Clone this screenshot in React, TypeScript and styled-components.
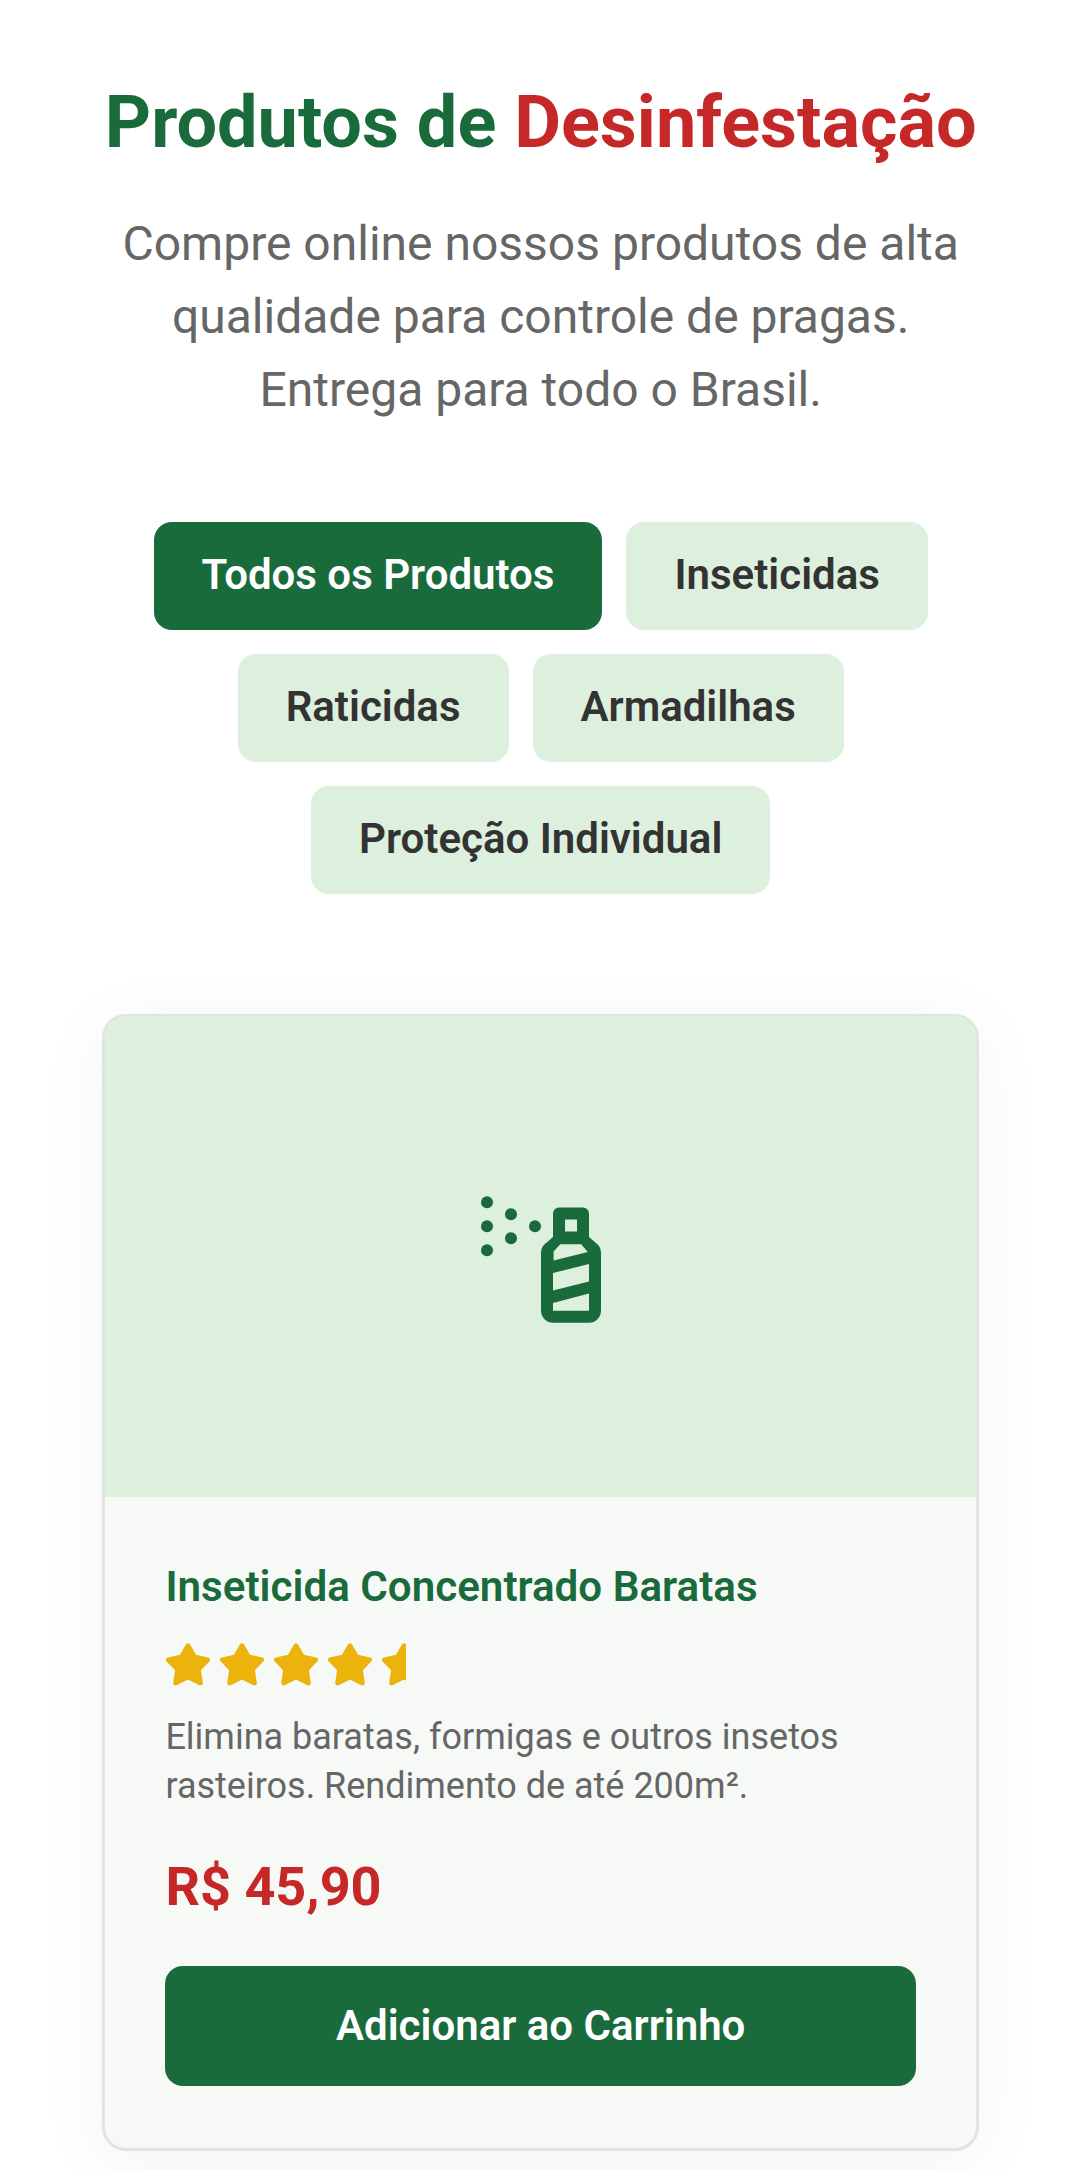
import { FC } from "react"
import styled, { createGlobalStyle } from "styled-components"

const GREEN = "#1a6b3c"
const LIGHT_GREEN = "#ddefdd"
const RED = "#c62828"

const GlobalStyle = createGlobalStyle`
  html, body {
    margin: 0;
    padding: 0;
    background: #fff;
    font-family: Roboto, "Liberation Sans", sans-serif;
  }
  * {
    box-sizing: border-box;
  }
`

const Page = styled.main`
  width: 1080px;
  height: 2170px;
  padding: 78px 101px 0 102.4px;
  overflow: hidden;
`

const Header = styled.header`
  text-align: center;
  margin-bottom: 96px;
`

const Title = styled.h1`
  margin: 0 0 39px;
  font-size: 72px;
  line-height: 90px;
  font-weight: 700;
  color: ${GREEN};
  white-space: nowrap;

  span {
    color: ${RED};
  }
`

const Subtitle = styled.p`
  margin: 0;
  font-size: 48px;
  line-height: 73px;
  color: #666;
`

const Filters = styled.nav`
  display: flex;
  flex-wrap: wrap;
  justify-content: center;
  gap: 24px;
  margin-bottom: 120px;
`

const FilterButton = styled.button<{ active?: boolean }>`
  height: 108px;
  padding: 0 48px 4px;
  border: 0;
  border-radius: 18px;
  font-family: inherit;
  font-size: 42px;
  font-weight: 600;
  color: ${({ active }) => (active ? "#fff" : "#333")};
  background: ${({ active }) => (active ? GREEN : LIGHT_GREEN)};
`

const Card = styled.article`
  border: 3px solid #dfe5df;
  border-radius: 24px;
  background: #f7f9f7;
  overflow: hidden;
  box-shadow: 0 12px 72px rgba(0, 0, 0, 0.05);
`

const CardImage = styled.div`
  display: flex;
  align-items: center;
  justify-content: center;
  height: 480px;
  padding-bottom: 4px;
  background: ${LIGHT_GREEN};
`

const CardBody = styled.div`
  padding: 60px 60px 62px;
`

const ProductName = styled.h3`
  margin: 3px 0 29px;
  font-size: 42.15px;
  line-height: 54px;
  font-weight: 600;
  color: ${GREEN};
`

const Rating = styled.div`
  display: flex;
  gap: 10px;
  padding-left: 1px;
  margin-bottom: 26px;
`

const Description = styled.p`
  margin: 0 0 37px;
  font-size: 36px;
  line-height: 48.6px;
  color: #666;
`

const Price = styled.div`
  margin-bottom: 39px;
  font-size: 54px;
  line-height: 80px;
  font-weight: 700;
  color: ${RED};
`

const AddButton = styled.button`
  display: block;
  width: 100%;
  height: 120px;
  padding: 0 0 2px;
  border: 0;
  border-radius: 18px;
  font-family: inherit;
  font-size: 42px;
  font-weight: 600;
  color: #fff;
  background: ${GREEN};
`

const SprayIcon: FC = () => (
  <svg width="144" height="144" viewBox="0 0 24 24" fill={GREEN}>
    <circle cx="3" cy="3.2" r="1" />
    <circle cx="3" cy="7.2" r="1" />
    <circle cx="3" cy="11.2" r="1" />
    <circle cx="7" cy="5.2" r="1" />
    <circle cx="7" cy="9.2" r="1" />
    <circle cx="11" cy="7.2" r="1" />
    <path
      fillRule="evenodd"
      d="M15 4.1h4a1 1 0 0 1 1 1v3.9l1.4 1.2a2 2 0 0 1 .6 1.4v9.7a2 2 0 0 1-2 2h-6a2 2 0 0 1-2-2v-9.7a2 2 0 0 1 .6-1.4l1.4-1.2V5.1a1 1 0 0 1 1-1zM16 6.1v2h2v-2zM15.2 10.2l-1.1 1.2v1.5l5.7-1.4-1.1-1.3zM14 15v2.9l6-1.5v-2.9zM14 20v1.3h6v-2.9z"
    />
  </svg>
)

const STAR_POINTS =
  "11,1.4 14.2,6.9 20.8,8.4 16.2,13.2 17.2,20 11,16.9 4.8,20 5.8,13.2 1.2,8.4 7.8,6.9"

const Star: FC<{ half?: boolean }> = ({ half }) => (
  <svg
    width={half ? 23.4 : 44}
    height="44"
    viewBox={half ? "0 0 11.7 22" : "0 0 22 22"}
  >
    <polygon
      points={STAR_POINTS}
      fill="#ecb30c"
      stroke="#ecb30c"
      strokeWidth="2.4"
      strokeLinejoin="round"
    />
  </svg>
)

export default function App() {
  return (
    <Page>
      <GlobalStyle />
      <Header>
        <Title>
          Produtos de <span>Desinfestação</span>
        </Title>
        <Subtitle>
          Compre online nossos produtos de alta qualidade para controle de
          pragas. Entrega para todo o Brasil.
        </Subtitle>
      </Header>
      <Filters>
        <FilterButton active>Todos os Produtos</FilterButton>
        <FilterButton>Inseticidas</FilterButton>
        <FilterButton>Raticidas</FilterButton>
        <FilterButton>Armadilhas</FilterButton>
        <FilterButton>Proteção Individual</FilterButton>
      </Filters>
      <Card>
        <CardImage>
          <SprayIcon />
        </CardImage>
        <CardBody>
          <ProductName>Inseticida Concentrado Baratas</ProductName>
          <Rating>
            <Star />
            <Star />
            <Star />
            <Star />
            <Star half />
          </Rating>
          <Description>
            Elimina baratas, formigas e outros insetos rasteiros. Rendimento de
            até 200m².
          </Description>
          <Price>R$ 45,90</Price>
          <AddButton>Adicionar ao Carrinho</AddButton>
        </CardBody>
      </Card>
    </Page>
  )
}
